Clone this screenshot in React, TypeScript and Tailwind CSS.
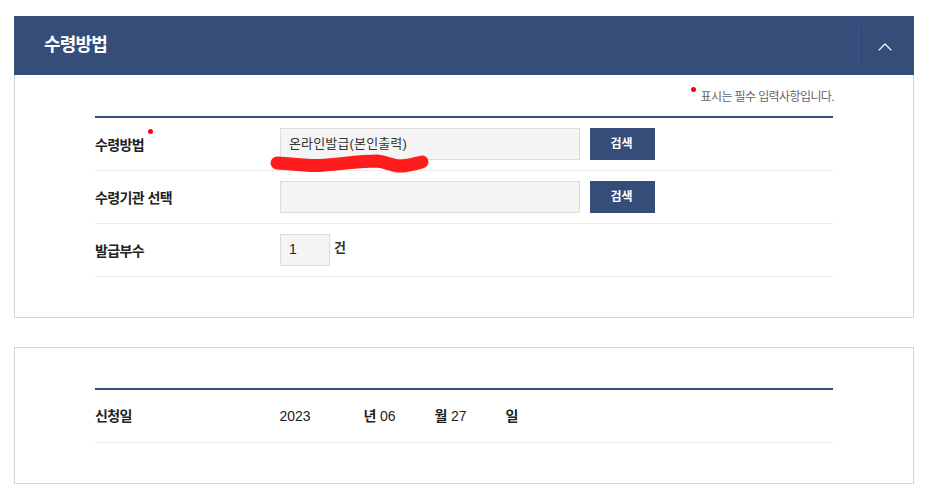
import { ChevronUp } from "lucide-react";

const font = "font-['Liberation_Sans','Noto_Sans_CJK_KR',sans-serif]";

function SearchButton() {
  return (
    <button
      type="button"
      className="ml-[10px] h-8 w-[65px] bg-[#344d79] pr-[2px] text-[12px] font-bold text-white"
    >
      검색
    </button>
  );
}

function Row({ label, dot, children }: { label: string; dot?: boolean; children: React.ReactNode }) {
  return (
    <div className="flex h-[53px] items-center border-b border-[#ececec] pb-px">
      <div className="relative w-[185px] pt-[3px] text-[14px] font-bold tracking-[-0.6px] text-[#222]">
        {label}
        {dot ? (
          <span className="absolute left-[53px] top-[-3px] h-[5px] w-[5px] rounded-full bg-[#f00]" />
        ) : null}
      </div>
      {children}
    </div>
  );
}

export default function App() {
  return (
    <div className={`${font} h-[498px] w-[933px] overflow-hidden bg-white pl-[14px] pt-4`}>
      <div className="w-[900px]">
        <div className="flex h-[59px] items-center justify-between bg-[#344d79] pl-[30px]">
          <h2 className="text-[18px] font-bold tracking-[-0.8px] text-white">수령방법</h2>
          <div className="flex h-[39px] w-[56px] items-center justify-center border-l border-dotted border-[#4a5f95] pr-1">
            <ChevronUp className="mt-[2px] h-[24px] w-[24px] text-white" strokeWidth={1.1} />
          </div>
        </div>

        <div className="h-[243px] border border-t-0 border-[#d5d5d5] pl-20 pr-20 pt-px">
          <div className="mr-[-1px] flex h-[40px] items-center justify-end pt-[2px] text-[12px] tracking-[-0.6px] text-[#666]">
            <span className="relative pl-[10px]">
              <span className="absolute left-0 top-[-1px] h-[5px] w-[5px] rounded-full bg-[#f00]" />
              표시는 필수 입력사항입니다.
            </span>
          </div>
          <div className="h-[2px] bg-[#344d79]" />
          <Row label="수령방법" dot>
            <div className="relative flex h-8 w-[300px] items-center border border-[#dcdcdc] bg-[#f4f4f4] pl-2 text-[13px] tracking-[0.15px] text-[#333]">
              온라인발급(본인출력)
              <svg
                className="absolute left-[-12px] top-[24px] overflow-visible blur-[0.7px]"
                width="162"
                height="18"
                viewBox="0 0 162 18"
                fill="none"
              >
                <path
                  d="M8 10 C25 11 38 13 51 12.5 C72 11 92 8 108 8 C118 9 123 13 131 13 C140 13 148 10 153 9"
                  stroke="#fe1c1c"
                  strokeWidth="13"
                  strokeLinecap="round"
                />
              </svg>
            </div>
            <SearchButton />
          </Row>
          <Row label="수령기관 선택">
            <div className="h-8 w-[300px] border border-[#dcdcdc] bg-[#f4f4f4]" />
            <SearchButton />
          </Row>
          <Row label="발급부수">
            <div className="flex h-8 w-[50px] items-center border border-[#dcdcdc] bg-[#f4f4f4] pl-2 text-[14px] text-[#222]">
              1
            </div>
            <span className="mb-[4px] ml-1 text-[13px] font-bold text-[#333]">건</span>
          </Row>
        </div>

        <div className="mt-[29px] h-[137px] border border-[#d5d5d5] pl-20 pr-20 pt-10">
          <div className="h-[2px] bg-[#344d79]" />
          <div className="flex h-[53px] items-center border-b border-[#ececec] text-[14px] text-[#222]">
            <div className="w-[184.5px] font-bold tracking-[-0.6px]">신청일</div>
            <span className="w-[84px]">2023</span>
            <span className="w-[71px] whitespace-pre tracking-[-0.1px]"><b>년</b> 06</span>
            <span className="w-[71px] whitespace-pre tracking-[-0.1px]"><b>월</b> 27</span>
            <b>일</b>
          </div>
        </div>
      </div>
    </div>
  );
}
